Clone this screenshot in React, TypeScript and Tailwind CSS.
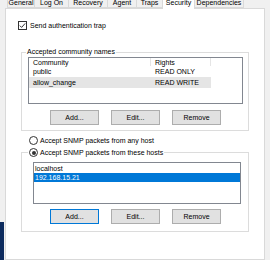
import React from "react";

function Btn({ label, focused }: { label: string; focused?: boolean }) {
  return (
    <div
      className={
        "w-[49px] h-[15px] flex items-center justify-center bg-[#e1e1e1] border " +
        (focused ? "border-[#0078d7]" : "border-[#adadad]")
      }
    >
      {label}
    </div>
  );
}

function Radio({ checked }: { checked?: boolean }) {
  return (
    <div className="w-[9px] h-[9px] rounded-full border border-[#333333] bg-white flex items-center justify-center">
      {checked && <div className="w-[4px] h-[4px] rounded-full bg-[#333333]" />}
    </div>
  );
}

const tabs = [
  { name: "General", w: "w-[28px]" },
  { name: "Log On", w: "w-[35px]" },
  { name: "Recovery", w: "w-[40px]" },
  { name: "Agent", w: "w-[30px]" },
  { name: "Traps", w: "w-[27px]" },
  { name: "Security", w: "w-[33px]", sel: true },
  { name: "Dependencies", w: "w-[50px]" },
];

export default function App() {
  return (
    <div className="w-[270px] h-[260px] flex bg-[#f0f0f0] overflow-hidden font-['Liberation_Sans',Arial,sans-serif] text-[7px] leading-none text-black">
      <div className="w-[4px] flex flex-col">
        <div className="flex-1 bg-[#f0f0f0]" />
        <div className="h-[38px] bg-[#0d2b5e]" />
      </div>
      <div className="flex-1 flex flex-col">
        <div className="h-[8px] flex pl-[3px] relative z-10">
          {tabs.map((t) => (
            <div
              key={t.name}
              className={
                t.w +
                " flex justify-center border-x border-[#d9d9d9] -mr-[1px] " +
                (t.sel ? "bg-white h-[9px]" : "bg-[#f0f0f0] h-[8px] border-b")
              }
            >
              <span className="leading-[6px]">{t.name}</span>
            </div>
          ))}
        </div>
        <div className="ml-[1px] w-[260px] flex-1 border border-[#d9d9d9] bg-white flex flex-col">
          <div className="mt-[12px] ml-[12px] flex items-center h-[9px]">
            <div className="w-[9px] h-[9px] border border-[#333333] bg-white flex items-center justify-center">
              <svg width="7" height="7" viewBox="0 0 7 7">
                <polyline points="0.8,3.6 2.6,5.4 6.2,1.4" fill="none" stroke="#333333" strokeWidth="1" />
              </svg>
            </div>
            <span className="ml-[3px]">Send authentication trap</span>
          </div>

          <fieldset className="mt-[18px] ml-[15px] w-[228px] border border-[#dcdcdc]">
            <legend className="ml-[4px] px-[1px] leading-[8px]">Accepted community names</legend>
            <div className="mt-[1px] ml-[6px] w-[215px] h-[47px] border border-[#828790] bg-white">
              <div className="flex h-[8px]">
                <div className="w-[122px] pl-[4px] border-r border-[#e5e5e5] flex items-center">Community</div>
                <div className="w-[60px] pl-[4px] border-r border-[#e5e5e5] flex items-center">Rights</div>
              </div>
              <div className="flex h-[11px] items-center">
                <div className="w-[122px] pl-[4px]">public</div>
                <div className="w-[60px] pl-[4px]">READ ONLY</div>
              </div>
              <div className="flex h-[11px] items-center w-[182px] bg-[#e5e5e5]">
                <div className="w-[122px] pl-[4px]">allow_change</div>
                <div className="w-[60px] pl-[4px]">READ WRITE</div>
              </div>
            </div>
            <div className="mt-[6px] ml-[28px] flex gap-[12px]">
              <Btn label="Add..." />
              <Btn label="Edit..." />
              <Btn label="Remove" />
            </div>
            <div className="h-[5px]" />
          </fieldset>

          <div className="mt-[5px] ml-[23px] flex items-center h-[9px]">
            <Radio />
            <span className="ml-[2px]">Accept SNMP packets from any host</span>
          </div>

          <fieldset className="mt-[3px] ml-[15px] w-[228px] border border-[#dcdcdc]">
            <legend className="ml-[6px] px-[1px] flex items-center h-[9px]">
              <Radio checked />
              <span className="ml-[2px]">Accept SNMP packets from these hosts</span>
            </legend>
            <div className="mt-[5px] ml-[11px] w-[208px] h-[42px] border border-[#828790] bg-white pt-[1px]">
              <div className="h-[9px] flex items-center pl-[1px]">localhost</div>
              <div className="h-[9px] flex items-center pl-[1px] bg-[#0078d7] text-white">192.168.15.21</div>
            </div>
            <div className="mt-[5px] ml-[28px] flex gap-[12px]">
              <Btn label="Add..." focused />
              <Btn label="Edit..." />
              <Btn label="Remove" />
            </div>
            <div className="h-[7px]" />
          </fieldset>
        </div>
      </div>
    </div>
  );
}
